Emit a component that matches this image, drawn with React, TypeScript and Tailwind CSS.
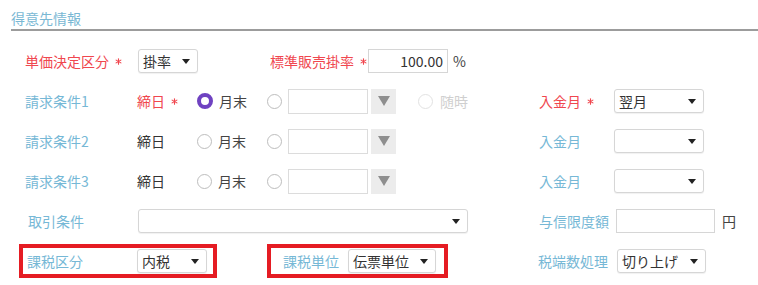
import React from 'react'
import { Asterisk } from 'lucide-react'

const font = { fontFamily: '"Noto Sans CJK JP", "Noto Sans", sans-serif' }

function Caret() {
  return <span className="w-0 h-0 border-x-[4px] border-x-transparent border-t-[5px] border-t-[#222] shrink-0" />
}

function Select({ value, width }: { value?: string; width: string }) {
  return (
    <div
      className={`h-[24px] ${width} border border-[#d6d6d6] rounded-[3px] bg-white flex items-center justify-between pl-[4px] pr-[7px] text-[14px] text-[#333] shadow-[0_1px_1px_rgba(0,0,0,0.06)] shrink-0`}
    >
      <span className="leading-none">{value}</span>
      <Caret />
    </div>
  )
}

function Radio({ checked, disabled }: { checked?: boolean; disabled?: boolean }) {
  if (checked) {
    return <span className="w-[16px] h-[16px] rounded-full border-[4px] border-[#6f42c1] bg-white shrink-0" />
  }
  return (
    <span
      className={`w-[15px] h-[15px] rounded-full border-[1.5px] bg-white shrink-0 ${disabled ? 'border-[#e2e2e2]' : 'border-[#bdbdbd]'}`}
    />
  )
}

function Req({ children }: { children: React.ReactNode }) {
  return (
    <span className="inline-flex items-center whitespace-nowrap text-[#f0474f]">
      {children}
      <Asterisk className="ml-[4px] w-[11px] h-[11px] shrink-0" strokeWidth={2.5} />
    </span>
  )
}

function ClosingRow({ label, required, first }: { label: string; required?: boolean; first?: boolean }) {
  return (
    <div className="h-[40px] flex items-center pl-[25px]">
      <div className="w-[514px] flex items-center">
        <span className="w-[112px] text-[#76b8d6]">{label}</span>
        <span className="w-[60px]">{required ? <Req>締日</Req> : <span className="text-[#333]">締日</span>}</span>
        <div className="w-[70px] flex items-center">
          <Radio checked={first} />
          <span className="ml-[6px] text-[#444]">月末</span>
        </div>
        <Radio />
        <div className="ml-[6px] w-[80px] h-[25px] border border-[#dcdcdc] bg-white" />
        <div className="ml-[3px] w-[25px] h-[25px] bg-[#ececec] flex items-center justify-center">
          <span className="w-0 h-0 border-x-[6px] border-x-transparent border-t-[10px] border-t-[#8e8e8e]" />
        </div>
        {first && (
          <div className="ml-[22px] flex items-center">
            <Radio disabled />
            <span className="ml-[7px] text-[#cfcfcf]">随時</span>
          </div>
        )}
      </div>
      <span className="w-[75px]">
        {required ? <Req>入金月</Req> : <span className="text-[#76b8d6]">入金月</span>}
      </span>
      <Select value={first ? '翌月' : ''} width="w-[90px]" />
    </div>
  )
}

export default function App() {
  return (
    <div className="w-[758px] h-[285px] bg-white text-[14px] overflow-hidden" style={font}>
      {/* Header */}
      <div className="ml-[11px] pt-[8px] border-b-2 border-[#9c9c9c] text-[#7ab8d4] leading-[20px] pb-[1px]">
        得意先情報
      </div>

      <div className="pt-[10px]">
        {/* Row 1 */}
        <div className="h-[40px] flex items-center pl-[25px]">
          <span className="w-[113px] shrink-0">
            <Req>単価決定区分</Req>
          </span>
          <Select value="掛率" width="w-[60px]" />
          <span className="ml-[72px] w-[98px] shrink-0">
            <Req>標準販売掛率</Req>
          </span>
          <div className="w-[80px] h-[24px] border border-[#d6d6d6] bg-white flex items-center justify-end pr-[4px] text-[#333] shrink-0">
            100.00
          </div>
          <span className="ml-[5px] text-[#444]">%</span>
        </div>

        <ClosingRow label="請求条件1" required first />
        <ClosingRow label="請求条件2" />
        <ClosingRow label="請求条件3" />

        {/* Row 5 */}
        <div className="h-[40px] flex items-center pl-[25px]">
          <span className="w-[113px] pl-[3px] text-[#76b8d6]">取引条件</span>
          <Select width="w-[330px]" />
          <span className="ml-[71px] w-[77px] text-[#76b8d6]">与信限度額</span>
          <div className="w-[99px] h-[24px] border border-[#d6d6d6] bg-white" />
          <span className="ml-[7px] text-[#444]">円</span>
        </div>

        {/* Row 6 */}
        <div className="h-[40px] flex items-center pl-[19px]">
          <div className="w-[198px] h-[34px] border-[4px] border-[#e51c23] flex items-center pl-[4px]">
            <span className="w-[110px] text-[#76b8d6]">課税区分</span>
            <Select value="内税" width="w-[70px]" />
          </div>
          <div className="ml-[50px] w-[181px] h-[34px] border-[4px] border-[#e51c23] flex items-center pl-[12px]">
            <span className="w-[65px] text-[#76b8d6]">課税単位</span>
            <Select value="伝票単位" width="w-[88px]" />
          </div>
          <span className="ml-[90px] w-[79px] text-[#76b8d6]">税端数処理</span>
          <Select value="切り上げ" width="w-[89px]" />
        </div>
      </div>
    </div>
  )
}
